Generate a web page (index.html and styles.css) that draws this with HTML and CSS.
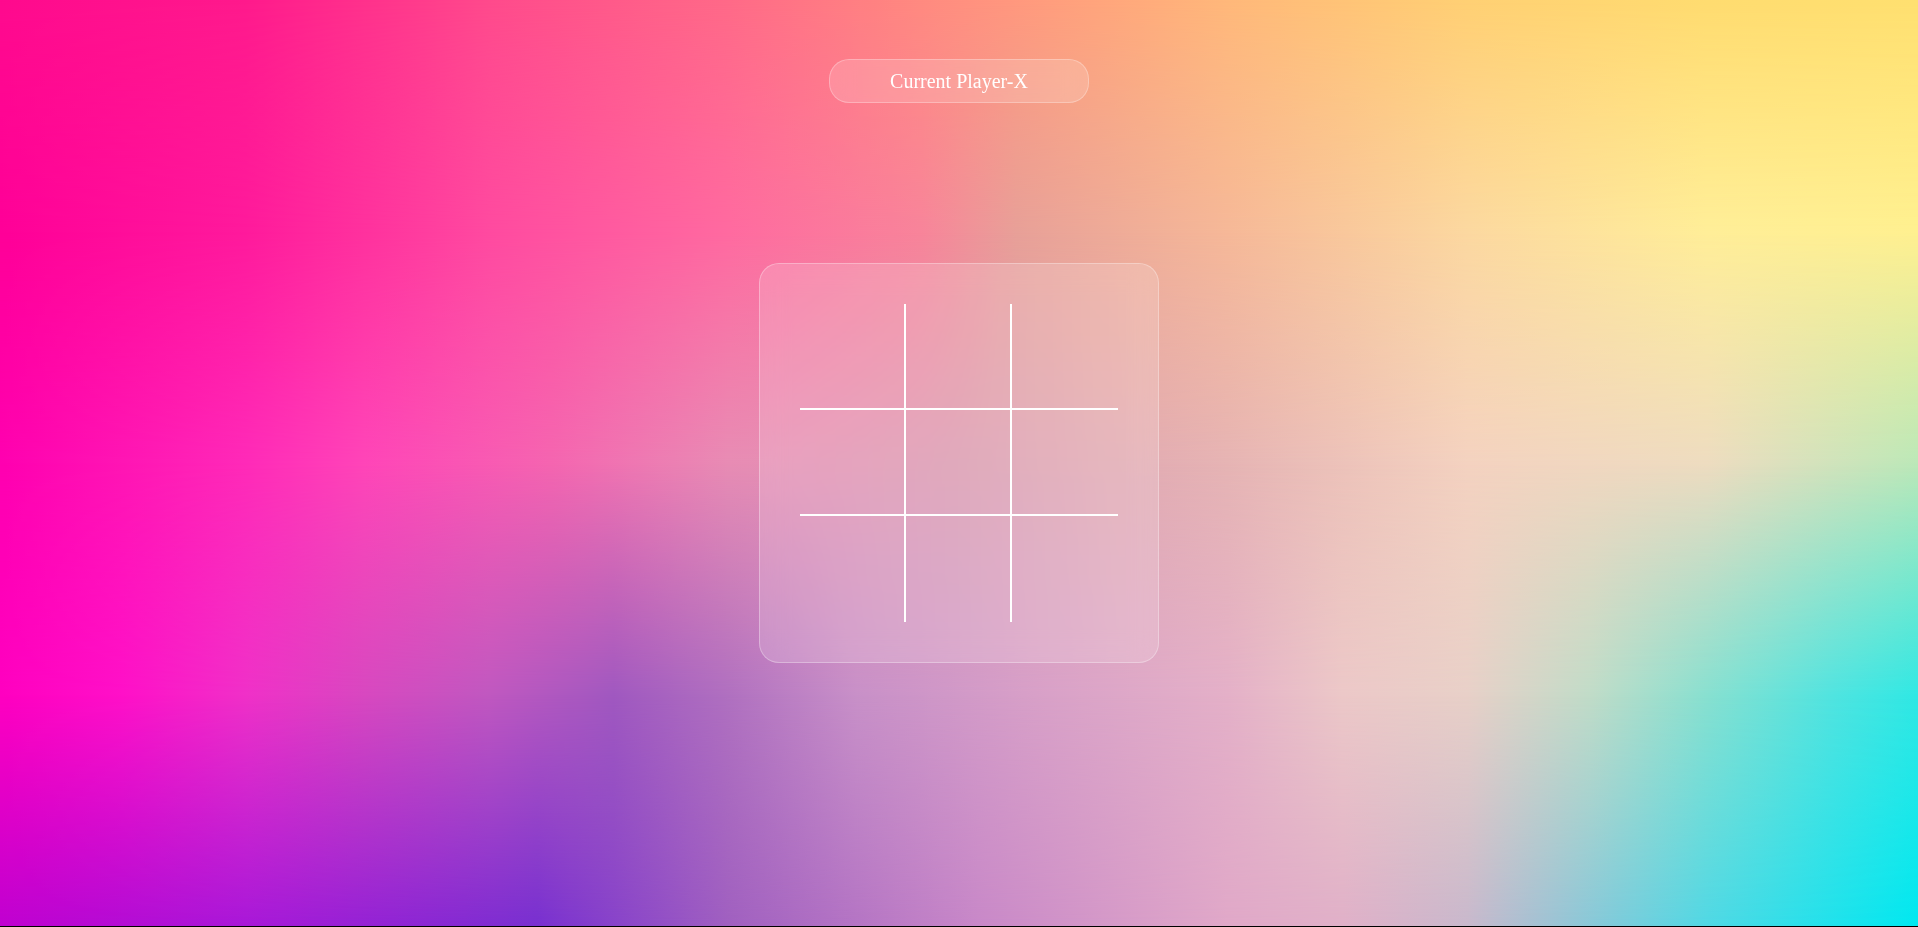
FILE: index.html
```html
<!DOCTYPE html>
<html lang="en">
<head>
<meta charset="utf-8">
<title>Tic Tac Toe</title>
<link rel="stylesheet" href="styles.css">
</head>
<body>
<div class="backdrop" aria-hidden="true">
  <div class="layer row0"></div>
  <div class="layer row1"></div>
  <div class="layer row2"></div>
  <div class="layer row3"></div>
  <div class="layer row4"></div>
</div>
<main class="game">
  <div class="status">Current Player-X</div>
  <div class="board">
    <div class="cell"></div>
    <div class="cell"></div>
    <div class="cell"></div>
    <div class="cell"></div>
    <div class="cell"></div>
    <div class="cell"></div>
    <div class="cell"></div>
    <div class="cell"></div>
    <div class="cell"></div>
  </div>
</main>
</body>
</html>
```

FILE: styles.css
```css
html {
  margin: 0;
  padding: 0;
  background: #000;
}

body {
  margin: 0;
  height: calc(100vh - 1px);
  overflow: hidden;
  display: grid;
  grid-template: 1fr / 1fr;
  font-family: "Liberation Serif", "Times New Roman", serif;
}

.backdrop {
  grid-area: 1 / 1;
  display: grid;
  grid-template: 1fr / 1fr;
}

.layer {
  grid-area: 1 / 1;
}

.row0 {
  background: linear-gradient(to right,
    #ff0a8e 0%, #ff1a8c 12.8%, #ff4a8c 25.5%, #ff6a88 38%, #ff8a80 48%,
    #ffa47c 57%, #ffb87a 64%, #ffd074 76.5%, #ffdc70 89%, #ffe070 100%);
}

.row1 {
  background: linear-gradient(to right,
    #ff0098 0%, #ff1a9c 12.8%, #ff4aa0 25.5%, #ff6aa0 38%, #f8849a 48%,
    #e8a098 53%, #f6b898 64%, #fcd8a0 76.5%, #ffee98 89%, #fff090 100%);
  -webkit-mask-image: linear-gradient(to bottom, transparent 0%, #000 25%);
  mask-image: linear-gradient(to bottom, transparent 0%, #000 25%);
}

.row2 {
  background: linear-gradient(to right,
    #ff00b0 0%, #ff2ab8 12.8%, #ff45b8 19%, #f565b0 28.7%, #e88cb4 38%,
    #da9ab0 50%, #e6b4b4 64%, #f4d2c0 76.5%, #eedcc0 89%, #bce8b8 100%);
  -webkit-mask-image: linear-gradient(to bottom, transparent 25%, #000 50%);
  mask-image: linear-gradient(to bottom, transparent 25%, #000 50%);
}

.row3 {
  background: linear-gradient(to right,
    #ff00c0 0%, #ff10c8 6.4%, #f030c8 12.8%, #d848c0 19%, #c058c0 25.5%,
    #a058c0 32%, #b070c0 38%, #c890c8 44.6%, #d8a0c8 54%, #e4b0c8 64%,
    #ecc8c8 70%, #e8d0c8 76.5%, #c0dcc8 83%, #88e0d0 89%, #50e4e0 95.6%, #30e8e4 100%);
  -webkit-mask-image: linear-gradient(to bottom, transparent 50%, #000 75%);
  mask-image: linear-gradient(to bottom, transparent 50%, #000 75%);
}

.row4 {
  background: linear-gradient(to right,
    #c000d0 0%, #a818d8 12.8%, #7830d0 28%, #a060c0 38%, #c888c8 51%,
    #e0a8c8 64%, #e0b0c8 70%, #c8b8cc 76.5%, #88c8d8 83%, #50d8e4 89%, #00e8f0 100%);
  -webkit-mask-image: linear-gradient(to bottom, transparent 75%, #000 100%);
  mask-image: linear-gradient(to bottom, transparent 75%, #000 100%);
}

.game {
  grid-area: 1 / 1;
  display: flex;
  flex-direction: column;
  align-items: center;
  padding-top: 59px;
  z-index: 1;
}

.status {
  box-sizing: border-box;
  width: 260px;
  height: 44px;
  display: flex;
  align-items: center;
  justify-content: center;
  color: #fff;
  font-size: 20px;
  border-radius: 20px;
  background: rgba(255, 255, 255, 0.16);
  border: 1px solid rgba(255, 255, 255, 0.28);
  backdrop-filter: blur(12px);
}

.board {
  box-sizing: border-box;
  margin-top: 160px;
  width: 400px;
  height: 400px;
  padding: 40px;
  display: grid;
  grid-template-columns: repeat(3, 106px);
  grid-template-rows: repeat(3, 106px);
  border-radius: 20px;
  background: rgba(255, 255, 255, 0.16);
  border: 1px solid rgba(255, 255, 255, 0.3);
  backdrop-filter: blur(14px);
}

.cell {
  box-sizing: border-box;
}

.cell:nth-child(3n+1),
.cell:nth-child(3n+2) {
  border-right: 2px solid #fff;
}

.cell:nth-child(-n+6) {
  border-bottom: 2px solid #fff;
}
```
